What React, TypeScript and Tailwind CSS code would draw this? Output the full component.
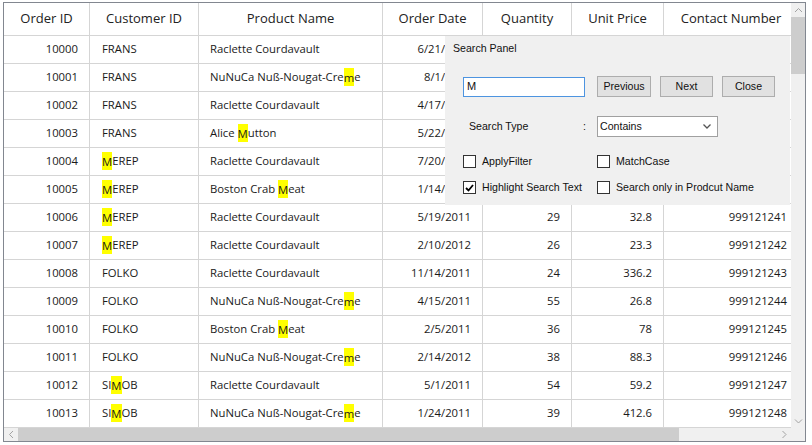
import React from "react";

type Order = {
  id: string;
  customer: string;
  product: string;
  date: string;
  qty: string;
  price: string;
  contact: string;
};

const orders: Order[] = [
  { id: "10000", customer: "FRANS", product: "Raclette Courdavault", date: "6/21/2011", qty: "32", price: "45.6", contact: "999121235" },
  { id: "10001", customer: "FRANS", product: "NuNuCa Nuß-Nougat-Creme", date: "8/1/2011", qty: "48", price: "12.4", contact: "999121236" },
  { id: "10002", customer: "FRANS", product: "Raclette Courdavault", date: "4/17/2011", qty: "21", price: "67.5", contact: "999121237" },
  { id: "10003", customer: "FRANS", product: "Alice Mutton", date: "5/22/2011", qty: "17", price: "39.1", contact: "999121238" },
  { id: "10004", customer: "MEREP", product: "Raclette Courdavault", date: "7/20/2011", qty: "44", price: "55.2", contact: "999121239" },
  { id: "10005", customer: "MEREP", product: "Boston Crab Meat", date: "1/14/2012", qty: "30", price: "18.4", contact: "999121240" },
  { id: "10006", customer: "MEREP", product: "Raclette Courdavault", date: "5/19/2011", qty: "29", price: "32.8", contact: "999121241" },
  { id: "10007", customer: "MEREP", product: "Raclette Courdavault", date: "2/10/2012", qty: "26", price: "23.3", contact: "999121242" },
  { id: "10008", customer: "FOLKO", product: "Raclette Courdavault", date: "11/14/2011", qty: "24", price: "336.2", contact: "999121243" },
  { id: "10009", customer: "FOLKO", product: "NuNuCa Nuß-Nougat-Creme", date: "4/15/2011", qty: "55", price: "26.8", contact: "999121244" },
  { id: "10010", customer: "FOLKO", product: "Boston Crab Meat", date: "2/5/2011", qty: "36", price: "78", contact: "999121245" },
  { id: "10011", customer: "FOLKO", product: "NuNuCa Nuß-Nougat-Creme", date: "2/14/2012", qty: "38", price: "88.3", contact: "999121246" },
  { id: "10012", customer: "SIMOB", product: "Raclette Courdavault", date: "5/1/2011", qty: "54", price: "59.2", contact: "999121247" },
  { id: "10013", customer: "SIMOB", product: "NuNuCa Nuß-Nougat-Creme", date: "1/24/2011", qty: "39", price: "412.6", contact: "999121248" },
];

const headers = ["Order ID", "Customer ID", "Product Name", "Order Date", "Quantity", "Unit Price", "Contact Number"];

// search text is "M", highlight matches ignoring case
function Highlight({ text }: { text: string }) {
  const parts = text.split(/(m)/i);
  return (
    <span className="whitespace-pre">
      {parts.map((p, i) =>
        p.toLowerCase() === "m" ? (
          <span key={i} className="bg-[#ffff00] py-[1.5px]">
            {p}
          </span>
        ) : (
          p
        )
      )}
    </span>
  );
}

function Chevron({ dir }: { dir: "up" | "down" | "left" | "right" }) {
  const d = {
    up: "M1 5 L4.5 1.5 L8 5",
    down: "M1 1.5 L4.5 5 L8 1.5",
    left: "M5 1 L1.5 4.5 L5 8",
    right: "M1.5 1 L5 4.5 L1.5 8",
  }[dir];
  const horiz = dir === "up" || dir === "down";
  return (
    <svg width={horiz ? 9 : 7} height={horiz ? 7 : 9} viewBox={horiz ? "0 0 9 7" : "0 0 7 9"}>
      <path d={d} fill="none" stroke="#a3a3a3" strokeWidth="1" />
    </svg>
  );
}

function CheckBox({ checked, label, width }: { checked?: boolean; label: string; width?: string }) {
  return (
    <div className={`flex items-center gap-[6px] ${width ?? ""}`}>
      <div className="flex h-[13px] w-[13px] shrink-0 items-center justify-center border border-[#333333] bg-white">
        {checked && (
          <svg width="9" height="8" viewBox="0 0 9 8">
            <path d="M1 4 L3.5 6.5 L8 1" fill="none" stroke="#000" strokeWidth="1.8" />
          </svg>
        )}
      </div>
      <span className="whitespace-nowrap">{label}</span>
    </div>
  );
}

function Button({ label, width }: { label: string; width: string }) {
  return (
    <div className={`flex h-[21px] ${width} items-center justify-center border border-[#adadad] bg-[#e1e1e1]`}>
      {label}
    </div>
  );
}

function SearchPanel() {
  return (
    <div className="absolute left-[441px] top-[33px] flex h-[169px] w-[345px] flex-col bg-[#f0f0f0] pl-[8px] pt-[6px] font-['Liberation_Sans',Arial,sans-serif] text-[10.6px] leading-[13px] text-[#111]">
      <div>Search Panel</div>

      <div className="mt-[21px] flex items-center pl-[10px]">
        <div className="flex h-[20px] w-[122px] items-center border border-[#4d94e0] bg-white pl-[3px] text-[11px]">M</div>
        <div className="ml-[12px]">
          <Button label="Previous" width="w-[54px]" />
        </div>
        <div className="ml-[9px]">
          <Button label="Next" width="w-[53px]" />
        </div>
        <div className="ml-[9px]">
          <Button label="Close" width="w-[53px]" />
        </div>
      </div>

      <div className="mt-[19px] flex items-center pl-[10px]">
        <span className="w-[120px] pl-[6px]">Search Type</span>
        <span className="w-[14px]">:</span>
        <div className="flex h-[21px] w-[121px] items-center justify-between border border-[#a0a0a0] bg-white pl-[2px] pr-[6px]">
          <span>Contains</span>
          <svg width="8" height="5" viewBox="0 0 8 5">
            <path d="M0.5 0.5 L4 4 L7.5 0.5" fill="none" stroke="#555" strokeWidth="1.3" />
          </svg>
        </div>
      </div>

      <div className="mt-[18px] flex items-center pl-[10px]">
        <CheckBox label="ApplyFilter" width="w-[134px]" />
        <CheckBox label="MatchCase" />
      </div>
      <div className="mt-[13px] flex items-center pl-[10px]">
        <CheckBox checked label="Highlight Search Text" width="w-[134px]" />
        <CheckBox label="Search only in Prodcut Name" />
      </div>
    </div>
  );
}

export default function App() {
  const cols = "grid grid-cols-[86px_109px_184px_100px_89px_92px_134px] w-[794px]";
  const cell = "flex items-center border-b border-r border-[#d5d5d5]";

  return (
    <div className="h-[445px] w-[812px] bg-white pl-[3px] pt-[2px]">
      <div className="relative flex h-[440px] w-[803px] flex-col border border-[#828790] font-['Open_Sans',sans-serif] text-[11.3px] text-[#1a1a1a]">
        <div className="flex min-h-0 flex-1">
          <div className="w-[787px] overflow-hidden">
            <div className={cols}>
              {headers.map((h, i) => (
                <div
                  key={h}
                  className={`${cell} h-[33px] justify-center text-[13px] text-[#222] ${i === 6 ? "border-r-0" : ""}`}
                >
                  {h}
                </div>
              ))}
            </div>
            {orders.map((o) => (
              <div key={o.id} className={cols}>
                <div className={`${cell} h-[28px] justify-end pr-[11px]`}>{o.id}</div>
                <div className={`${cell} h-[28px] pl-[12px]`}>
                  <Highlight text={o.customer} />
                </div>
                <div className={`${cell} h-[28px] pl-[11px]`}>
                  <Highlight text={o.product} />
                </div>
                <div className={`${cell} h-[28px] justify-end pr-[11px]`}>{o.date}</div>
                <div className={`${cell} h-[28px] justify-end pr-[11px]`}>{o.qty}</div>
                <div className={`${cell} h-[28px] justify-end pr-[11px]`}>{o.price}</div>
                <div className={`${cell} h-[28px] justify-end border-r-0 pr-[11px]`}>{o.contact}</div>
              </div>
            ))}
          </div>

          {/* vertical scrollbar */}
          <div className="flex w-[14px] flex-col bg-[#f0f0f0]">
            <div className="flex h-[14px] items-center justify-center">
              <Chevron dir="up" />
            </div>
            <div className="h-[57px] bg-[#cdcdcd]" />
            <div className="flex-1" />
            <div className="flex h-[14px] items-center justify-center">
              <Chevron dir="down" />
            </div>
          </div>
        </div>

        {/* horizontal scrollbar */}
        <div className="flex h-[13px] bg-[#f0f0f0]">
          <div className="flex w-[14px] items-center justify-center">
            <Chevron dir="left" />
          </div>
          <div className="w-[661px] bg-[#cdcdcd]" />
          <div className="flex-1" />
          <div className="flex w-[14px] items-center justify-center">
            <Chevron dir="right" />
          </div>
          <div className="w-[14px]" />
        </div>

        <SearchPanel />
      </div>
    </div>
  );
}
